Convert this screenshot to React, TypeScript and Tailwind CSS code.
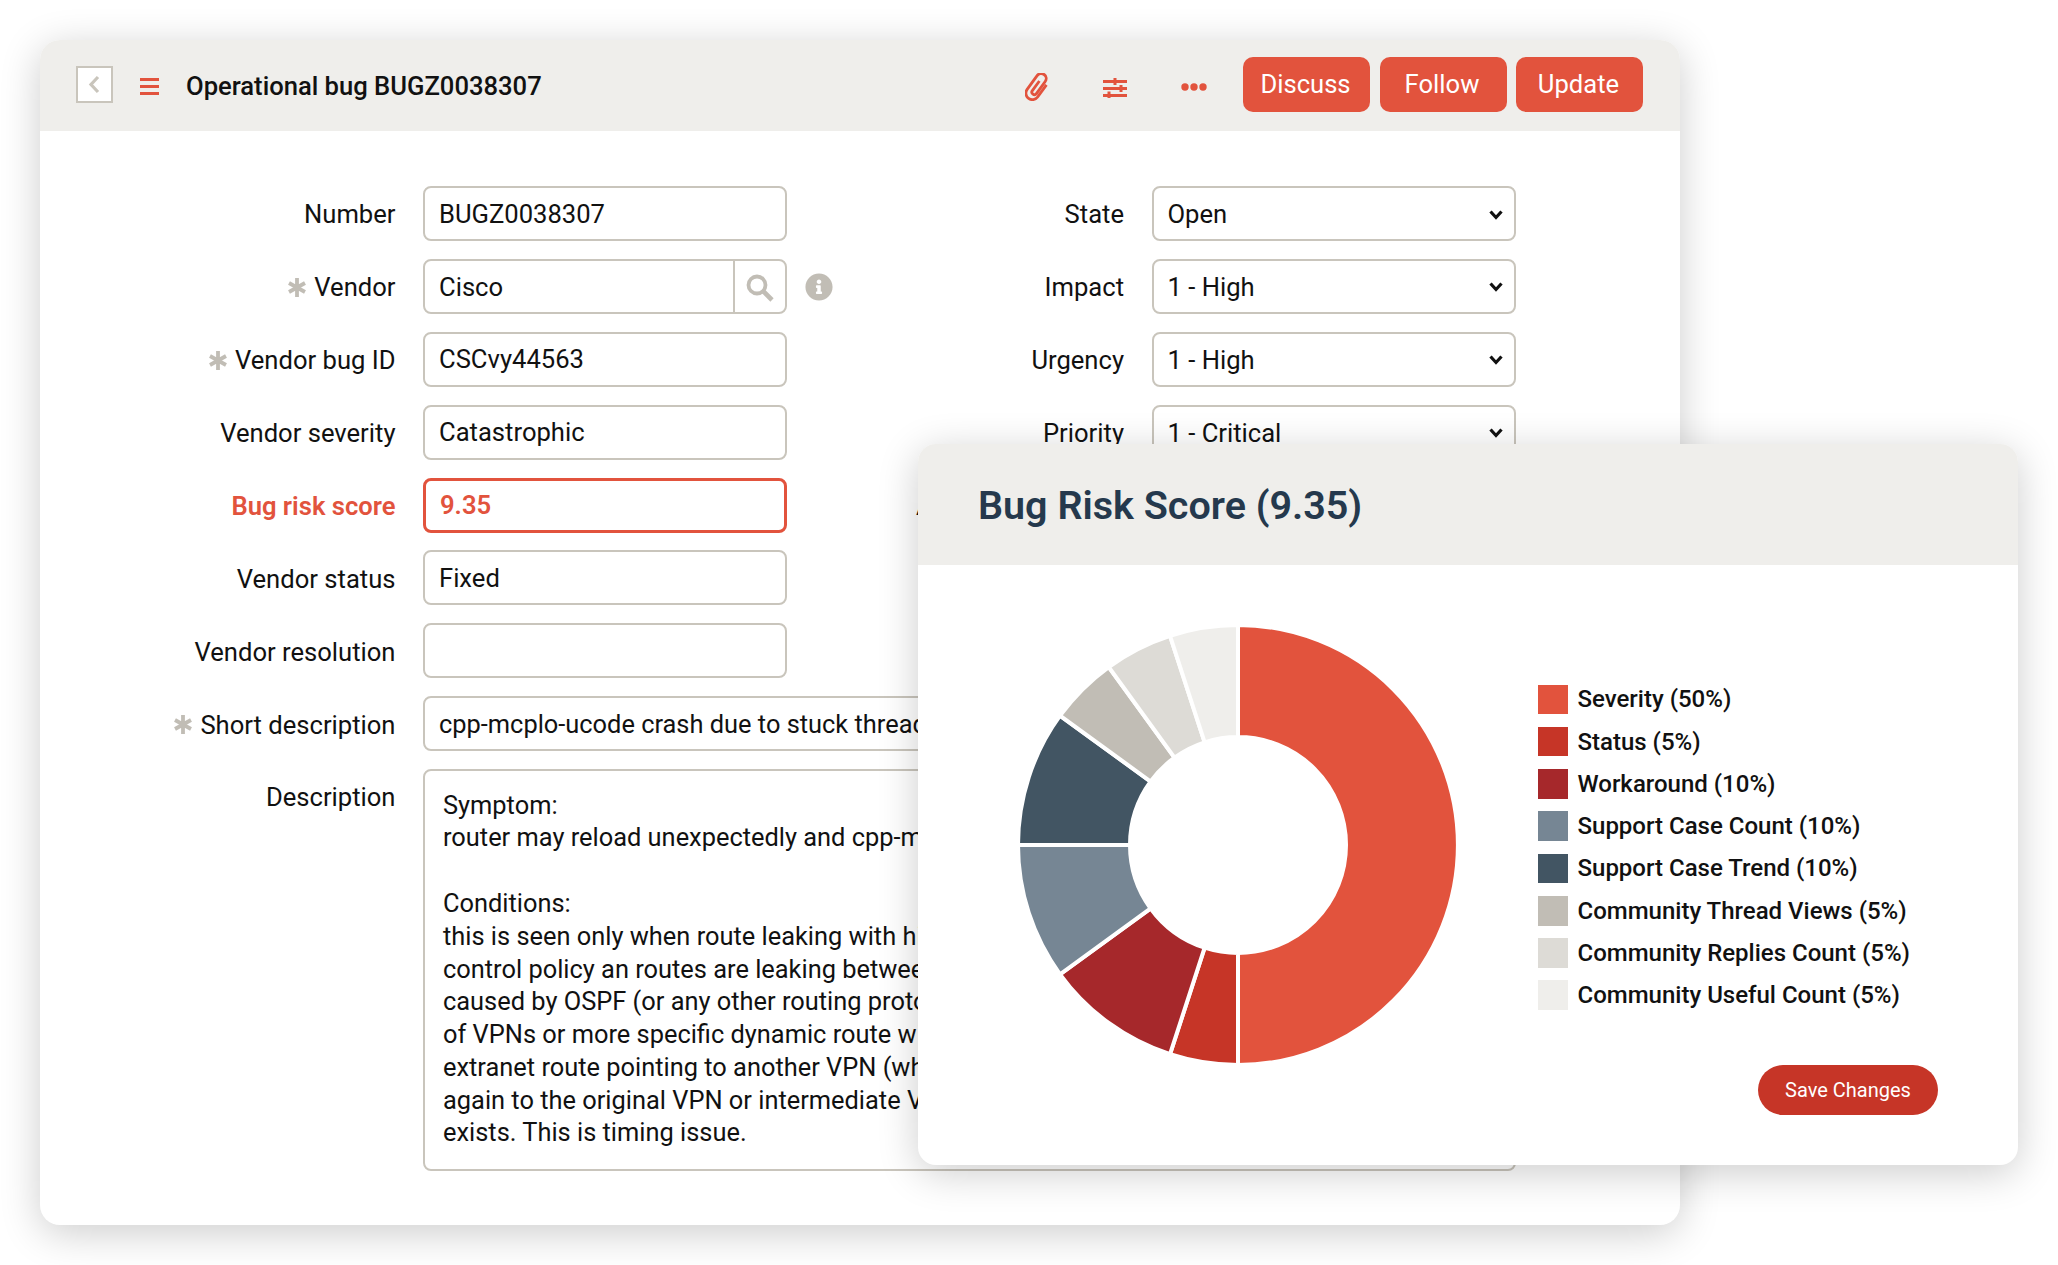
import type { ReactNode } from 'react';
import { FaInfoCircle } from 'react-icons/fa';

const RED = '#e2533d';

const segments = [
  { label: 'Severity (50%)', pct: 50, color: '#e2533d', swatch: 'bg-[#e2533d]' },
  { label: 'Status (5%)', pct: 5, color: '#c63527', swatch: 'bg-[#c63527]' },
  { label: 'Workaround (10%)', pct: 10, color: '#a6282b', swatch: 'bg-[#a6282b]' },
  { label: 'Support Case Count (10%)', pct: 10, color: '#768694', swatch: 'bg-[#768694]' },
  { label: 'Support Case Trend (10%)', pct: 10, color: '#425563', swatch: 'bg-[#425563]' },
  { label: 'Community Thread Views (5%)', pct: 5, color: '#c1bdb5', swatch: 'bg-[#c1bdb5]' },
  { label: 'Community Replies Count (5%)', pct: 5, color: '#dddbd6', swatch: 'bg-[#dddbd6]' },
  { label: 'Community Useful Count (5%)', pct: 5, color: '#efeeeb', swatch: 'bg-[#efeeeb]' },
];

function polar(r: number, deg: number) {
  const a = ((deg - 90) * Math.PI) / 180;
  return `${220 + r * Math.cos(a)} ${220 + r * Math.sin(a)}`;
}

function slicePath(from: number, to: number) {
  const large = to - from > 180 ? 1 : 0;
  const outer = 220;
  const inner = 108;
  return `M${polar(outer, from)} A${outer} ${outer} 0 ${large} 1 ${polar(outer, to)} L${polar(inner, to)} A${inner} ${inner} 0 ${large} 0 ${polar(inner, from)} Z`;
}

function Donut() {
  let angle = 0;
  return (
    <svg width="440" height="440" viewBox="0 0 440 440" className="shrink-0">
      {segments.map(s => {
        const from = angle;
        angle += s.pct * 3.6;
        return <path key={s.label} d={slicePath(from, angle)} fill={s.color} stroke="#fff" strokeWidth="4" />;
      })}
    </svg>
  );
}

function Asterisk() {
  return (
    <svg width="18" height="19" viewBox="0 0 18 19" className="mr-2 shrink-0" stroke="#c1bdb5" strokeWidth="3.8">
      <path d="M9 0V19M1 5L17 14M1 14L17 5" />
    </svg>
  );
}

function Label({ children, required, accent }: { children: ReactNode; required?: boolean; accent?: boolean }) {
  return (
    <div className={`flex h-[55px] items-center justify-end whitespace-nowrap pr-[27.5px] pt-[2px] ${accent ? 'font-semibold text-[#e2533d]' : 'text-[#111]'}`}>
      {required && <Asterisk />}
      {children}
    </div>
  );
}

function Field({ value, accent }: { value: string; accent?: boolean }) {
  return (
    <input
      readOnly
      value={value}
      className={`h-[55px] w-full rounded-lg bg-white px-[14px] outline-none ${accent ? 'border-[3px] border-[#e2533d] font-semibold text-[#e2533d]' : 'border-2 border-[#c9c5bc] text-[#111]'}`}
    />
  );
}

function Select({ value }: { value: string }) {
  return (
    <div className="flex h-[55px] items-center justify-between rounded-lg border-2 border-[#c9c5bc] bg-white pl-[14px] pr-[11px] pt-[2px] text-[#111]">
      <span>{value}</span>
      <svg width="14" height="10" viewBox="0 0 14 10" fill="none" stroke="#111" strokeWidth="3.2">
        <path d="M1.5 1.5L7 7.5L12.5 1.5" />
      </svg>
    </div>
  );
}

const descriptionLines = [
  'Symptom:',
  'router may reload unexpectedly and cpp-mcplo-ucode crash',
  '',
  'Conditions:',
  'this is seen only when route leaking with high',
  'control policy an routes are leaking between',
  'caused by OSPF (or any other routing protocol',
  'of VPNs or more specific dynamic route with',
  'extranet route pointing to another VPN (which',
  'again to the original VPN or intermediate VPN',
  'exists. This is timing issue.',
];

export default function App() {
  return (
    <div className="relative h-[1265px] w-[2058px] overflow-hidden bg-white pl-[40px] pt-[40px] [font-family:Roboto,sans-serif] text-[25.6px]">
      {/* main form card */}
      <div className="h-[1185px] w-[1640px] overflow-hidden rounded-[20px] bg-white shadow-[0_8px_40px_rgba(0,0,0,0.2)]">
        <div className="flex h-[91px] items-center bg-[#efeeeb] pl-[36px] pr-[37px]">
          <button className="mb-[3px] flex h-[37px] w-[37px] items-center justify-center border-2 border-[#c9c5bc] bg-white pr-[2px]">
            <svg width="12" height="19" viewBox="0 0 12 19" fill="none" stroke="#c9c5bc" strokeWidth="3.2">
              <path d="M10 2L3 9.5L10 17" />
            </svg>
          </button>
          <svg width="19" height="17" viewBox="0 0 19 17" className="ml-[27px] mt-[1px]" fill={RED}>
            <rect y="0" width="19" height="3" />
            <rect y="7" width="19" height="3" />
            <rect y="14" width="19" height="3" />
          </svg>
          <h1 className="ml-[27px] mt-[1px] whitespace-nowrap text-[25.6px] font-medium text-[#111]">Operational bug BUGZ0038307</h1>

          <svg width="25" height="28" viewBox="0 0 25 28" className="ml-auto mt-[3px]" fill="none" stroke={RED} strokeWidth="2.8">
            <g transform="rotate(36 12.5 14) translate(5.5 -1)">
              <path d="M13 8V23A6.5 6.5 0 0 1 0 23V6A5 5 0 0 1 10 6V21A2.5 2.5 0 0 1 5 21V9" />
            </g>
          </svg>
          <svg width="24" height="22" viewBox="0 0 24 22" className="ml-[53px] mt-[2px]" fill={RED}>
            <rect y="4" width="24" height="3" />
            <rect y="11" width="24" height="3" />
            <rect y="18" width="24" height="3" />
            <rect x="10.5" y="2" width="3" height="7" />
            <rect x="16.5" y="9" width="3" height="7" />
            <rect x="4.5" y="15.500" width="3" height="7" />
          </svg>
          <svg width="26" height="8" viewBox="0 0 26 8" className="ml-[54px] mt-[3px]" fill={RED}>
            <circle cx="4" cy="4" r="3.7" />
            <circle cx="13" cy="4" r="3.7" />
            <circle cx="22" cy="4" r="3.7" />
          </svg>
          <div className="mb-[3px] ml-[36px] flex gap-[9.5px]">
            {['Discuss', 'Follow', 'Update'].map(b => (
              <button key={b} className="h-[55px] w-[127px] rounded-[10px] bg-[#e2533d] pr-[2px] text-[25.6px] text-white">
                {b}
              </button>
            ))}
          </div>
        </div>

        <div className="grid grid-cols-[383px_364px_364.500px_364px] gap-y-[17.9px] pt-[55px]">
          <Label>Number</Label>
          <Field value="BUGZ0038307" />
          <Label>State</Label>
          <Select value="Open" />

          <Label required>Vendor</Label>
          <div className="relative">
            <div className="flex h-[55px] items-center rounded-lg border-2 border-[#c9c5bc] bg-white pl-[14px] text-[#111]">
              <span className="flex-1 pt-[1px]">Cisco</span>
              <div className="flex h-full w-[52px] items-center justify-center border-l-2 border-[#c9c5bc] pt-[3px]">
                <svg width="28" height="28" viewBox="0 0 28 28" fill="none" stroke="#c1bdb5" strokeWidth="3.8">
                  <circle cx="11" cy="11" r="8.500" />
                  <path d="M17 17L26 26" strokeWidth="4.600" />
                </svg>
              </div>
            </div>
            <FaInfoCircle size={28} color="#c1bdb5" className="absolute left-[382px] top-[14px]" />
          </div>
          <Label>Impact</Label>
          <Select value="1 - High" />

          <Label required>Vendor bug ID</Label>
          <Field value="CSCvy44563" />
          <Label>Urgency</Label>
          <Select value="1 - High" />

          <Label>Vendor severity</Label>
          <Field value="Catastrophic" />
          <Label>Priority</Label>
          <Select value="1 - Critical" />

          <Label accent>Bug risk score</Label>
          <Field value="9.35" accent />
          {/* only the first letter's edge shows beside the popup */}
          <div className="col-span-2 flex h-[55px] items-center pl-[129px] pt-[2px] text-[#111]">A</div>

          <Label>Vendor status</Label>
          <Field value="Fixed" />
          <div className="col-span-2" />

          <Label>Vendor resolution</Label>
          <Field value="" />
          <div className="col-span-2" />

          <Label required>Short description</Label>
          <div className="col-span-3 text-[25.4px]">
            <Field value="cpp-mcplo-ucode crash due to stuck thread" />
          </div>

          <div className="flex h-[55px] items-center justify-end pr-[27.5px] pt-[2px] text-[#111]">Description</div>
          <div className="col-span-3 h-[402px] overflow-hidden whitespace-pre rounded-lg border-2 border-[#c9c5bc] bg-white px-[18px] pb-[16px] pt-[17.4px] text-[25.4px] leading-[32.8px] text-[#111]">
            {descriptionLines.map((line, i) => (
              <div key={i} className="h-[32.8px]">{line}</div>
            ))}
          </div>
        </div>
      </div>

      {/* risk score popup */}
      <div className="absolute left-[918px] top-[444px] h-[721px] w-[1100px] overflow-hidden rounded-[18px] bg-white shadow-[0_8px_40px_rgba(0,0,0,0.2)]">
        <div className="flex h-[120.500px] items-center bg-[#efeeeb] pl-[60px] pt-[2px]">
          <h2 className="text-[39.5px] font-semibold text-[#25394d]">Bug Risk Score (9.35)</h2>
        </div>
        <div className="flex pl-[100px] pt-[60px]">
          <Donut />
          <div className="ml-[80px] flex w-[400px] flex-col pt-[60px]">
            <ul className="flex flex-col gap-[12.6px]">
              {segments.map(s => (
                <li key={s.label} className="flex h-[29.700px] items-center whitespace-nowrap text-[24px] font-medium text-[#111]">
                  <span className={`mr-[9.5px] h-[29.700px] w-[30px] ${s.swatch}`} />
                  {s.label}
                </li>
              ))}
            </ul>
            <button className="ml-auto mt-[55px] h-[50px] w-[180px] rounded-full bg-[#c63527] text-[20px] text-white">
              Save Changes
            </button>
          </div>
        </div>
      </div>
    </div>
  );
}
